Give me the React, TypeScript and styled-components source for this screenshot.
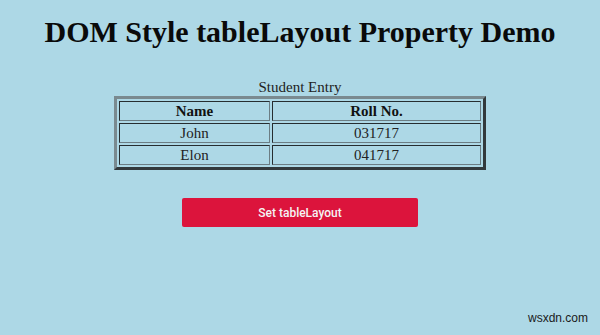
import styled, { createGlobalStyle } from "styled-components";

const GlobalStyle = createGlobalStyle`
  html, body {
    margin: 0;
    padding: 0;
    background-color: #add8e6;
  }
  body {
    font-family: "Liberation Serif", "Times New Roman", serif;
    color: #111;
  }
`;

const rows = [
  { name: "John", roll: "031717" },
  { name: "Elon", roll: "041717" },
];

function App() {
  return (
    <>
      <GlobalStyle />
      <Page>
        <Title>DOM Style tableLayout Property Demo</Title>
        <Table>
          <Caption>Student Entry</Caption>
          <thead>
            <tr>
              <Th w={149}>Name</Th>
              <Th>Roll No.</Th>
            </tr>
          </thead>
          <tbody>
            {rows.map((r) => (
              <tr key={r.roll}>
                <Td>{r.name}</Td>
                <Td>{r.roll}</Td>
              </tr>
            ))}
          </tbody>
        </Table>
        <Button>Set tableLayout</Button>
        <Watermark>wsxdn.com</Watermark>
      </Page>
    </>
  );
}

export default App;

const Page = styled.div`
  width: 600px;
  height: 335px;
  display: flex;
  flex-direction: column;
  align-items: center;
  position: relative;
  overflow: hidden;
`;

const Title = styled.h1`
  margin: 14px 0 0;
  font-size: 30px;
  line-height: 36px;
  font-weight: bold;
  color: #0a0a0a;
`;

const Table = styled.table`
  margin-top: 29px;
  width: 372px;
  border: 3px outset #7a8a90;
  border-spacing: 2px;
  font-size: 16px;
`;

const Caption = styled.caption`
  font-size: 15px;
  line-height: 17px;
  color: #222;
`;

const Th = styled.th<{ w?: number }>`
  border: 1px inset #6b7d84;
  height: 18px;
  padding: 0;
  font-size: 15px;
  ${({ w }) => (w ? `width: ${w}px;` : "")}
`;

const Td = styled.td`
  border: 1px inset #6b7d84;
  height: 18px;
  padding: 0;
  text-align: center;
  font-size: 15px;
  color: #222;
`;

const Button = styled.button`
  margin-top: 28px;
  width: 236px;
  height: 29px;
  border: none;
  border-radius: 2px;
  background-color: #dc143c;
  color: #f4f4f4;
  font-family: Roboto, "Liberation Sans", sans-serif;
  font-size: 12px;
  font-weight: 500;
`;

const Watermark = styled.div`
  position: absolute;
  right: 12px;
  bottom: 10px;
  font-family: "Liberation Sans", Arial, sans-serif;
  font-size: 12px;
  color: #1a1a1a;
`;
